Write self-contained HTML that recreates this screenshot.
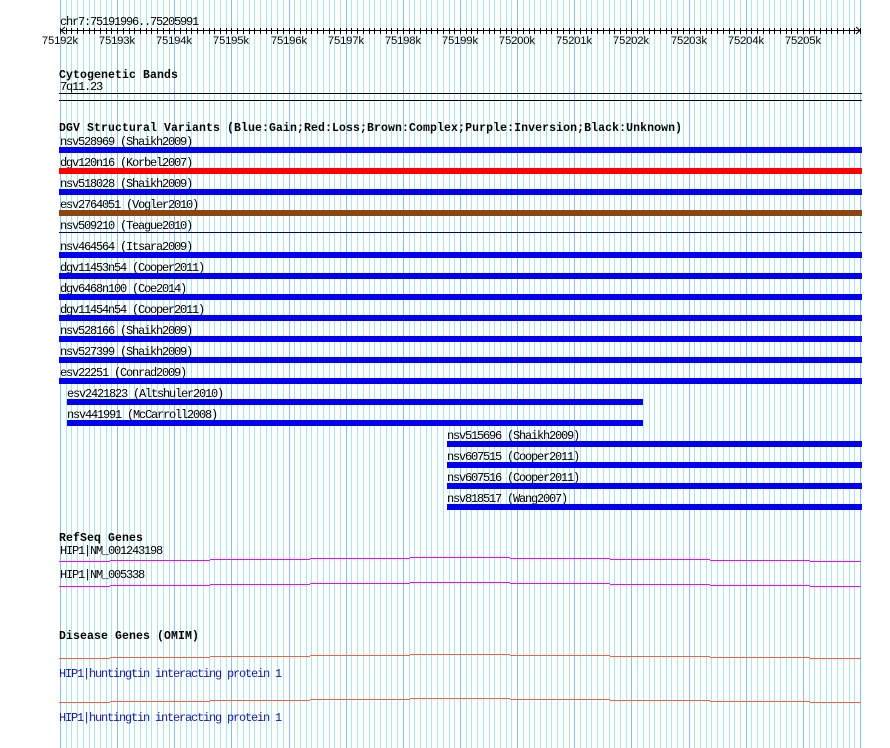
<!DOCTYPE html>
<html><head><meta charset="utf-8"><style>
html,body{margin:0;padding:0;background:#fff;width:890px;height:748px;overflow:hidden}
svg{display:block}
.m{font-family:"Liberation Mono",monospace;font-size:12px;letter-spacing:-1.2px;fill:#000}
.b{font-family:"Liberation Mono",monospace;font-size:11.5px;font-weight:bold;letter-spacing:0.1px;fill:#000}
.r{font-family:"Liberation Sans",sans-serif;font-size:11px;fill:#000}
.d{fill:#1a1a9c}
</style></head><body>
<svg width="890" height="748" viewBox="0 0 890 748" xmlns="http://www.w3.org/2000/svg">
<defs>
<pattern id="g" patternUnits="userSpaceOnUse" x="60" y="0" width="40" height="748">
<rect x="0" y="0" width="1" height="748" fill="#a8e8ec"/>
<rect x="6" y="0" width="1" height="748" fill="#a8e8ec"/>
<rect x="11" y="0" width="1" height="748" fill="#a8e8ec"/>
<rect x="17" y="0" width="1" height="748" fill="#a8e8ec"/>
<rect x="23" y="0" width="1" height="748" fill="#a8e8ec"/>
<rect x="29" y="0" width="1" height="748" fill="#a8e8ec"/>
<rect x="34" y="0" width="1" height="748" fill="#a8e8ec"/>
</pattern>
<pattern id="t" patternUnits="userSpaceOnUse" x="60" y="0" width="40" height="40">
<rect x="0" y="28" width="1" height="6" fill="#000"/>
<rect x="6" y="28" width="1" height="6" fill="#000"/>
<rect x="11" y="28" width="1" height="6" fill="#000"/>
<rect x="17" y="28" width="1" height="6" fill="#000"/>
<rect x="23" y="28" width="1" height="6" fill="#000"/>
<rect x="29" y="28" width="1" height="6" fill="#000"/>
<rect x="34" y="28" width="1" height="6" fill="#000"/>
</pattern>
</defs>
<rect x="60" y="0" width="801" height="748" fill="url(#g)"/>
<g fill="#84c4ec">
<rect x="60" y="0" width="1" height="748"/><rect x="117" y="0" width="1" height="748"/><rect x="174" y="0" width="1" height="748"/><rect x="231" y="0" width="1" height="748"/><rect x="289" y="0" width="1" height="748"/><rect x="346" y="0" width="1" height="748"/><rect x="403" y="0" width="1" height="748"/><rect x="460" y="0" width="1" height="748"/><rect x="517" y="0" width="1" height="748"/><rect x="574" y="0" width="1" height="748"/><rect x="631" y="0" width="1" height="748"/><rect x="689" y="0" width="1" height="748"/><rect x="746" y="0" width="1" height="748"/><rect x="803" y="0" width="1" height="748"/><rect x="860" y="0" width="1" height="748"/>
</g>
<!-- ruler -->
<text class="m" x="60" y="25">chr7:75191996..75205991</text>
<rect x="60" y="28" width="801" height="6" fill="url(#t)"/>
<rect x="60" y="30" width="801" height="1" fill="#000"/>
<path d="M65 27 L61 30.5 L65 34 M856 27 L860 30.5 L856 34" stroke="#000" fill="none"/>
<g class="r" text-anchor="middle">
<text x="60" y="44">75192k</text><text x="117" y="44">75193k</text><text x="174" y="44">75194k</text><text x="231" y="44">75195k</text><text x="289" y="44">75196k</text><text x="346" y="44">75197k</text><text x="403" y="44">75198k</text><text x="460" y="44">75199k</text><text x="517" y="44">75200k</text><text x="574" y="44">75201k</text><text x="631" y="44">75202k</text><text x="689" y="44">75203k</text><text x="746" y="44">75204k</text><text x="803" y="44">75205k</text>
</g>
<!-- cytobands -->
<text class="b" x="59" y="78">Cytogenetic Bands</text>
<text class="m" x="60" y="90">7q11.23</text>
<rect x="59" y="93" width="803" height="1" fill="#000"/>
<rect x="59" y="100" width="803" height="1" fill="#000"/>
<!-- DGV -->
<text class="b" x="59" y="131">DGV Structural Variants (Blue:Gain;Red:Loss;Brown:Complex;Purple:Inversion;Black:Unknown)</text>
<g class="m">
<text x="60" y="145">nsv528969 (Shaikh2009)</text>
<text x="60" y="166">dgv120n16 (Korbel2007)</text>
<text x="60" y="187">nsv518028 (Shaikh2009)</text>
<text x="60" y="208">esv2764051 (Vogler2010)</text>
<text x="60" y="229">nsv509210 (Teague2010)</text>
<text x="60" y="250">nsv464564 (Itsara2009)</text>
<text x="60" y="271">dgv11453n54 (Cooper2011)</text>
<text x="60" y="292">dgv6468n100 (Coe2014)</text>
<text x="60" y="313">dgv11454n54 (Cooper2011)</text>
<text x="60" y="334">nsv528166 (Shaikh2009)</text>
<text x="60" y="355">nsv527399 (Shaikh2009)</text>
<text x="60" y="376">esv22251 (Conrad2009)</text>
<text x="67" y="397">esv2421823 (Altshuler2010)</text>
<text x="67" y="418">nsv441991 (McCarroll2008)</text>
<text x="447" y="439">nsv515696 (Shaikh2009)</text>
<text x="447" y="460">nsv607515 (Cooper2011)</text>
<text x="447" y="481">nsv607516 (Cooper2011)</text>
<text x="447" y="502">nsv818517 (Wang2007)</text>
</g>
<g fill="#0000ee">
<rect x="59" y="147" width="803" height="6"/>
<rect x="59" y="168" width="803" height="6" fill="#ff0000"/>
<rect x="59" y="189" width="803" height="6"/>
<rect x="59" y="210" width="803" height="6" fill="#8b4513"/>
<rect x="59" y="232" width="803" height="1" fill="#000066"/>
<rect x="59" y="252" width="803" height="6"/>
<rect x="59" y="273" width="803" height="6"/>
<rect x="59" y="294" width="803" height="6"/>
<rect x="59" y="315" width="803" height="6"/>
<rect x="59" y="336" width="803" height="6"/>
<rect x="59" y="357" width="803" height="6"/>
<rect x="59" y="378" width="803" height="6"/>
<rect x="67" y="399" width="576" height="6"/>
<rect x="67" y="420" width="576" height="6"/>
<rect x="447" y="441" width="415" height="6"/>
<rect x="447" y="462" width="415" height="6"/>
<rect x="447" y="483" width="415" height="6"/>
<rect x="447" y="504" width="415" height="6"/>
</g>
<!-- RefSeq -->
<text class="b" x="59" y="541">RefSeq Genes</text>
<text class="m" x="60" y="554">HIP1|NM_001243198</text>
<text class="m" x="60" y="578">HIP1|NM_005338</text>
<g fill="#ff00ff">
<rect x="59" y="561" width="51" height="1"/><rect x="110" y="560" width="100" height="1"/><rect x="210" y="559" width="100" height="1"/><rect x="310" y="558" width="100" height="1"/><rect x="410" y="557" width="100" height="1"/><rect x="510" y="558" width="100" height="1"/><rect x="610" y="559" width="100" height="1"/><rect x="710" y="560" width="100" height="1"/><rect x="810" y="561" width="51" height="1"/>
<rect x="59" y="586" width="51" height="1"/><rect x="110" y="585" width="100" height="1"/><rect x="210" y="584" width="100" height="1"/><rect x="310" y="583" width="100" height="1"/><rect x="410" y="582" width="100" height="1"/><rect x="510" y="583" width="100" height="1"/><rect x="610" y="584" width="100" height="1"/><rect x="710" y="585" width="100" height="1"/><rect x="810" y="586" width="51" height="1"/>
</g>
<!-- OMIM -->
<text class="b" x="59" y="639">Disease Genes (OMIM)</text>
<g fill="#ff6040">
<rect x="59" y="658" width="51" height="1"/><rect x="110" y="657" width="100" height="1"/><rect x="210" y="656" width="100" height="1"/><rect x="310" y="655" width="100" height="1"/><rect x="410" y="654" width="100" height="1"/><rect x="510" y="655" width="100" height="1"/><rect x="610" y="656" width="100" height="1"/><rect x="710" y="657" width="100" height="1"/><rect x="810" y="658" width="51" height="1"/>
<rect x="59" y="702" width="51" height="1"/><rect x="110" y="701" width="100" height="1"/><rect x="210" y="700" width="100" height="1"/><rect x="310" y="699" width="100" height="1"/><rect x="410" y="698" width="100" height="1"/><rect x="510" y="699" width="100" height="1"/><rect x="610" y="700" width="100" height="1"/><rect x="710" y="701" width="100" height="1"/><rect x="810" y="702" width="51" height="1"/>
</g>
<text class="m d" x="59" y="677">HIP1|huntingtin interacting protein 1</text>
<text class="m d" x="59" y="721">HIP1|huntingtin interacting protein 1</text>
</svg>
</body></html>
